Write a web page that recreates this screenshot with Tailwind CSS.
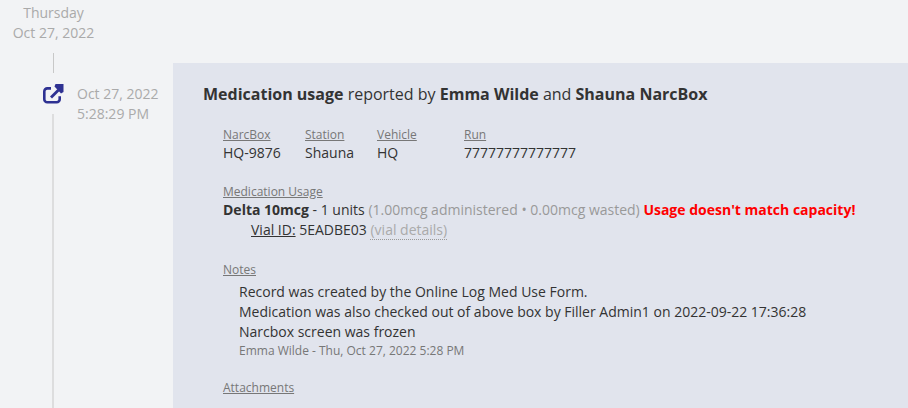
<!DOCTYPE html>
<html lang="en">
<head>
  <meta charset="UTF-8">
  <title>Medication usage</title>
  <script src="https://cdn.jsdelivr.net/npm/@tailwindcss/browser@4"></script>
</head>
<body class="bg-[#f2f3f5] font-['Open_Sans',sans-serif] text-[14px] leading-[20px] text-[#333333]">
  <div class="w-[908px] h-[408px] overflow-hidden">
    <!-- day heading -->
    <div class="w-[107px] pt-[3px] text-center text-[#aaaaaa]">
      <div>Thursday</div>
      <div>Oct 27, 2022</div>
    </div>
    <div class="ml-[53px] mt-[10px] w-px h-[20px] bg-[#c8c8c8]"></div>

    <div class="flex">
      <!-- time column -->
      <div class="w-[173px] shrink-0 flex pl-[43px]">
        <div class="w-[21px] shrink-0 flex flex-col items-center">
          <svg class="mt-[11px] w-[21px] h-[21px] shrink-0" viewBox="0 0 21 21" fill="none">
            <path d="M8 4.400H4.300a3 3 0 0 0-3 3v7.900a3 3 0 0 0 3 3h9.400a3 3 0 0 0 3-3v-3" stroke="#2e3192" stroke-width="2.600"/>
            <path d="M8 13.500 15.500 6" stroke="#2e3192" stroke-width="2.800"/>
            <path d="M12.500 0H20.500V8L18 9.500 11.500 2.500z" fill="#2e3192"/>
          </svg>
          <div class="mt-[9px] w-px h-[300px] bg-[#c8c8c8] -translate-x-[0.5px]"></div>
        </div>
        <div class="pl-[13px] pt-[11px] text-[#aaaaaa] whitespace-nowrap">
          <div>Oct 27, 2022</div>
          <div>5:28:29 PM</div>
        </div>
      </div>

      <!-- card -->
      <div class="flex-1 -mt-[10px] bg-[#e1e4ed] pl-[30px] pt-[19px] h-[345px]">
        <div class="text-[16px] leading-[24px]"><b>Medication usage</b> reported by <b>Emma Wilde</b> and <b>Shauna NarcBox</b></div>

        <div class="ml-[20px] mt-[20px] flex">
          <div class="w-[82px]">
            <div class="text-[12px] leading-[17px] underline text-[#777777]">NarcBox</div>
            <div>HQ-9876</div>
          </div>
          <div class="w-[72px]">
            <div class="text-[12px] leading-[17px] underline text-[#777777]">Station</div>
            <div>Shauna</div>
          </div>
          <div class="w-[87px]">
            <div class="text-[12px] leading-[17px] underline text-[#777777]">Vehicle</div>
            <div>HQ</div>
          </div>
          <div>
            <div class="text-[12px] leading-[17px] underline text-[#777777]">Run</div>
            <div>77777777777777</div>
          </div>
        </div>

        <div class="ml-[20px] mt-[20px]">
          <div class="text-[12px] leading-[17px] underline text-[#777777]">Medication Usage</div>
          <div><b>Delta 10mcg</b> - 1 units <span class="text-[#999999]">(1.00mcg administered • 0.00mcg wasted)</span> <b class="text-[#ff0000]">Usage doesn't match capacity!</b></div>
          <div class="ml-[28px]"><span class="underline">Vial ID:</span> 5EADBE03 <span class="text-[#aaaaaa] border-b border-dotted border-[#999999]">(vial details)</span></div>
        </div>

        <div class="ml-[20px] mt-[21px]">
          <div class="text-[12px] leading-[17px] underline text-[#777777]">Notes</div>
          <div class="ml-[16px] mt-[4px]">
            <div>Record was created by the Online Log Med Use Form.</div>
            <div>Medication was also checked out of above box by Filler Admin1 on 2022-09-22 17:36:28</div>
            <div>Narcbox screen was frozen</div>
            <div class="text-[12px] leading-[18px] text-[#777777]">Emma Wilde - Thu, Oct 27, 2022 5:28 PM</div>
          </div>
        </div>

        <div class="ml-[20px] mt-[19px]">
          <div class="text-[12px] leading-[17px] underline text-[#777777]">Attachments</div>
        </div>
      </div>
    </div>
  </div>
</body>
</html>
